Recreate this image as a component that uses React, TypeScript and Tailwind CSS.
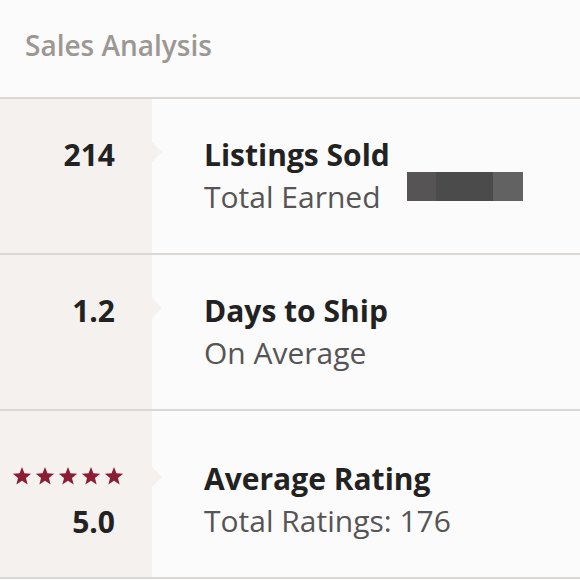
import React from 'react';

interface Stat {
  title: string;
  subtitle: string;
  value: string;
  stars?: number;
  blurred?: boolean;
}

const stats: Stat[] = [
  { value: '214', title: 'Listings Sold', subtitle: 'Total Earned', blurred: true },
  { value: '1.2', title: 'Days to Ship', subtitle: 'On Average' },
  { value: '5.0', title: 'Average Rating', subtitle: 'Total Ratings: 176', stars: 5 },
];

function Star() {
  return (
    <svg viewBox="0 0 24 24" className="w-[20px] h-[20px]" fill="#8b1d35">
      <path d="M12 1.3L14.94 8.75L22.94 9.25L16.76 14.35L18.76 22.1L12 17.8L5.24 22.1L7.24 14.35L1.06 9.25L9.06 8.75Z" />
    </svg>
  );
}

function StatRow({ stat }: { stat: Stat }) {
  const tall = !!stat.stars;
  return (
    <div
      className={`flex border-b-2 border-[#dcd8d5] ${tall ? 'h-[168px]' : 'h-[156px]'}`}
    >
      <div
        className={`relative w-[152px] shrink-0 bg-[#f4f1ee] flex flex-col items-end justify-center pr-[37px] ${
          tall ? 'pt-[20px]' : ''
        }`}
      >
        {stat.stars ? (
          <>
            <div className="flex gap-[3px] -mr-[9px] mb-[15px]">
              {Array.from({ length: stat.stars }).map((_, i) => (
                <Star key={i} />
              ))}
            </div>
            <span className="text-[30px] leading-[42px] font-bold text-[#222]">{stat.value}</span>
          </>
        ) : (
          <span className="text-[30px] leading-[42px] font-bold text-[#222] -mt-[42px]">{stat.value}</span>
        )}
        {/* little pointer into the content */}
        <div
          className={`absolute left-full w-0 h-0 border-y-[10px] border-y-transparent border-l-[10px] border-l-[#f4f1ee] ${
            tall ? 'top-[56px]' : 'top-[43px]'
          }`}
        />
      </div>
      <div className={`flex-1 flex flex-col justify-center pl-[52px] ${tall ? 'pt-[12px]' : ''}`}>
        <div className="text-[30px] leading-[42px] font-bold text-[#222]">{stat.title}</div>
        <div className="flex items-start">
          <span className="text-[30px] leading-[42px] text-[#555]">{stat.subtitle}</span>
          {stat.blurred && (
            <div className="ml-[26px] flex h-[29px] mt-[-4px]">
              <div className="w-[29px] bg-[#565454]" />
              <div className="w-[57px] bg-[#4b4b4b]" />
              <div className="w-[30px] bg-[#626262]" />
            </div>
          )}
        </div>
      </div>
    </div>
  );
}

export default function App() {
  return (
    <main
      className="w-[580px] h-[580px] overflow-hidden bg-[#fcfbfb]"
      style={{ fontFamily: '"Open Sans", Lato, sans-serif' }}
    >
      <div className="h-[99px] border-b-2 border-[#dcd8d5] flex items-center pl-[25px] pb-[8px]">
        <h2 className="text-[28px] font-semibold text-[#9b9894]">Sales Analysis</h2>
      </div>
      {stats.map((s) => (
        <StatRow key={s.title} stat={s} />
      ))}
    </main>
  );
}
